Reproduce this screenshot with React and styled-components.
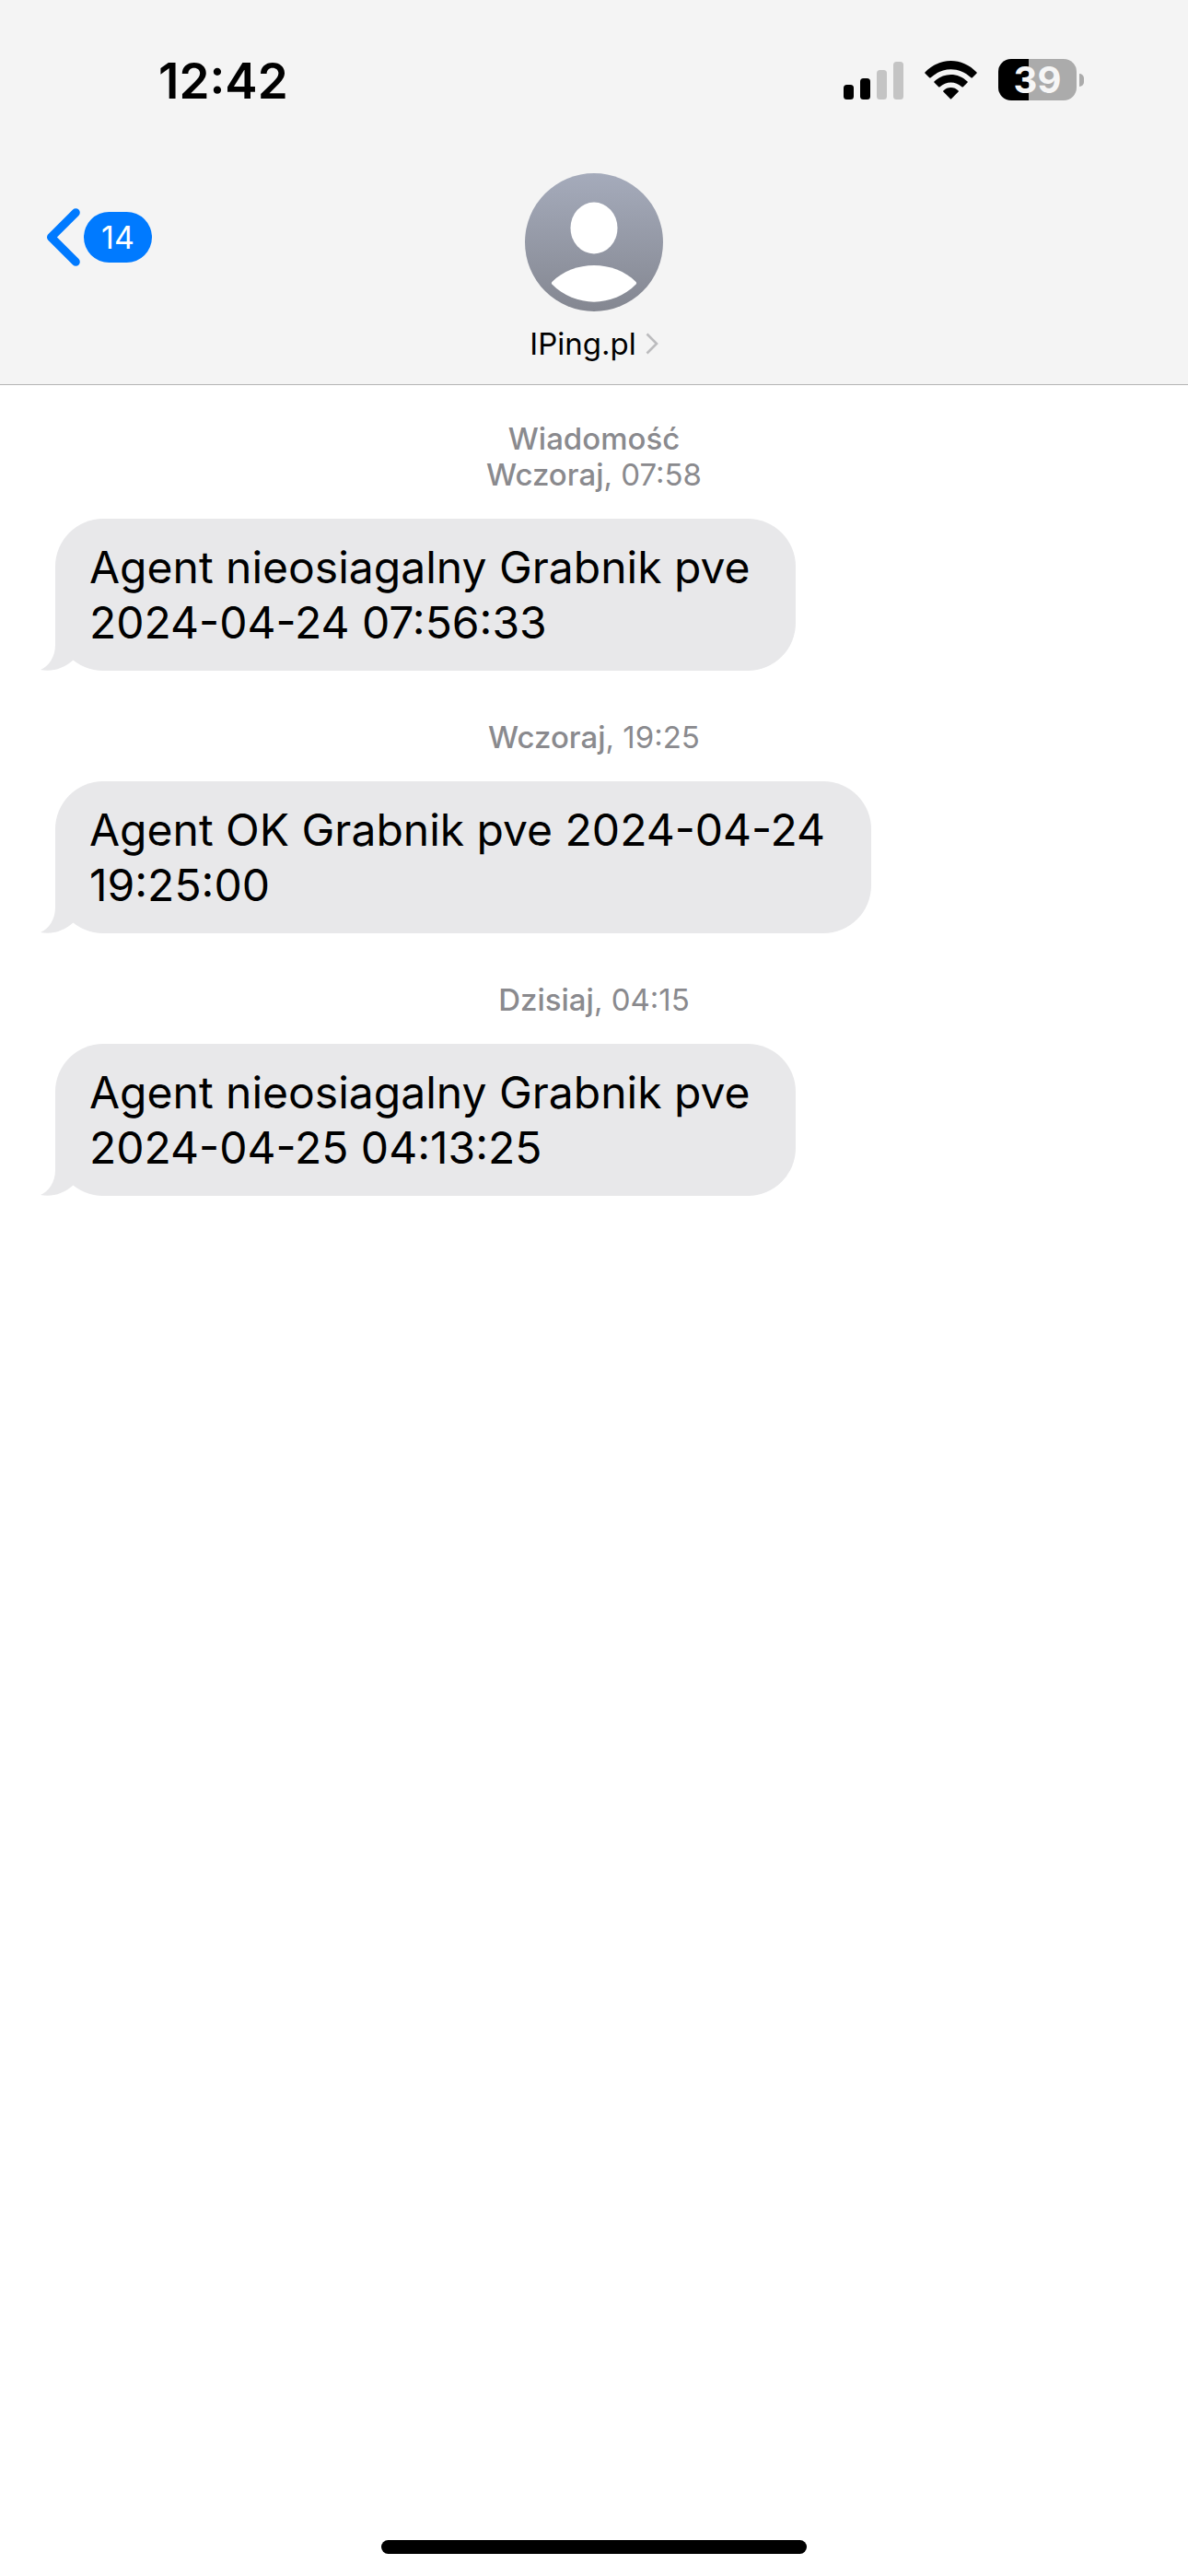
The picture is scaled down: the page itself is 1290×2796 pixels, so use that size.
import React from "react";
import styled, { createGlobalStyle } from "styled-components";

const GlobalStyle = createGlobalStyle`
  *, *::before, *::after { box-sizing: border-box; }
  body {
    margin: 0;
    background: #ffffff;
    color: #000000;
    font-family: Inter, "Noto Sans", sans-serif;
  }
  button {
    margin: 0;
    padding: 0;
    border: 0;
    background: none;
    color: inherit;
    font: inherit;
  }
`;

const Screen = styled.div`
  display: flex;
  flex-direction: column;
  min-height: 100vh;
`;

const Header = styled.header`
  background: #f4f4f4;
  border-bottom: 1px solid #b3b3b3;
`;

const StatusBar = styled.div`
  display: flex;
  align-items: flex-end;
  justify-content: space-between;
  height: 118px;
  padding: 0 113px 0 172px;
`;

const Clock = styled.time`
  font-size: 53px;
  font-weight: 600;
  line-height: 60px;
`;

const StatusIcons = styled.div`
  display: flex;
  align-items: center;
  gap: 23px;
  padding-bottom: 9px;
`;

const Battery = styled.div`
  display: flex;
  align-items: center;
  gap: 3px;
`;

const BatteryLevel = styled.div`
  width: 85px;
  height: 45px;
  border-radius: 14px;
  background: linear-gradient(
    to right,
    #000000 ${(p) => p.$level}%,
    #ababab ${(p) => p.$level}%
  );
  color: #f6f6f6;
  font-size: 40px;
  font-weight: 700;
  line-height: 45px;
  text-align: center;
`;

const BatteryTip = styled.div`
  width: 5px;
  height: 14px;
  border-radius: 0 5px 5px 0;
  background: #ababab;
`;

const NavBar = styled.nav`
  display: grid;
  grid-template-columns: 1fr auto 1fr;
  align-items: start;
  height: 299px;
  padding: 70px 50px 0;
`;

const BackButton = styled.button`
  display: flex;
  align-items: center;
  justify-self: start;
  gap: 4px;
  margin-top: 38px;
`;

const UnreadBadge = styled.span`
  min-width: 74px;
  height: 55px;
  border-radius: 28px;
  background: #007aff;
  color: #ffffff;
  font-size: 34px;
  line-height: 55px;
  text-align: center;
`;

const ContactButton = styled.button`
  display: flex;
  flex-direction: column;
  align-items: center;
  gap: 16px;
`;

const ContactName = styled.span`
  display: flex;
  align-items: center;
  gap: 10px;
  font-size: 33px;
  line-height: 38px;
`;

const Conversation = styled.main`
  display: flex;
  flex: 1;
  flex-direction: column;
  gap: 53px;
  padding: 39px 60px;
`;

const Entry = styled.section`
  display: flex;
  flex-direction: column;
  align-items: flex-start;
  gap: 28px;
`;

const Stamp = styled.div`
  align-self: stretch;
  color: #8a8a8e;
  font-size: 33px;
  line-height: 39px;
  text-align: center;
`;

const StampDay = styled.span`
  font-weight: 500;
`;

const Bubble = styled.div`
  position: relative;
  max-width: 80%;
  padding: 23px 50px 22px 37px;
  border-radius: 52px;
  background: #e8e8ea;
`;

const BubbleText = styled.p`
  margin: 0;
  font-size: 48px;
  line-height: 60px;
  white-space: pre-line;
`;

const Tail = styled.svg`
  position: absolute;
  bottom: 0;
  left: -16px;
`;

const HomeArea = styled.footer`
  display: flex;
  justify-content: center;
  padding: 24px 0;
`;

const HomeIndicator = styled.div`
  width: 462px;
  height: 15px;
  border-radius: 8px;
  background: #000000;
`;

const entries = [
  {
    title: "Wiadomość",
    day: "Wczoraj",
    time: "07:58",
    text: "Agent nieosiagalny Grabnik pve\n2024-04-24 07:56:33",
  },
  {
    day: "Wczoraj",
    time: "19:25",
    text: "Agent OK Grabnik pve 2024-04-24\n19:25:00",
  },
  {
    day: "Dzisiaj",
    time: "04:15",
    text: "Agent nieosiagalny Grabnik pve\n2024-04-25 04:13:25",
  },
];

function SignalIcon() {
  return (
    <svg width="65" height="42" viewBox="0 0 65 42" aria-hidden="true">
      <rect x="0" y="26" width="11" height="16" rx="3.5" fill="#000" />
      <rect x="18" y="19" width="11" height="23" rx="3.5" fill="#000" />
      <rect x="36" y="10" width="11" height="32" rx="3.5" fill="#c4c4c4" />
      <rect x="54" y="1" width="11" height="41" rx="3.5" fill="#c4c4c4" />
    </svg>
  );
}

function WifiIcon() {
  return (
    <svg width="57" height="42" viewBox="0 0 57 42" aria-hidden="true">
      <path d="M0.4 12.6C16 -4.2 41 -4.2 56.6 12.6Q57 13 56.6 13.5L51.6 18.4Q51 18.8 50.4 18.3C37.6 6.2 19.4 6.2 6.6 18.3Q6 18.8 5.4 18.4L0.4 13.5Q0 13 0.4 12.6Z" />
      <path d="M10.4 22.6C20.5 12.3 36.5 12.3 46.6 22.6Q47 23 46.6 23.5L41.6 28.4Q41 28.8 40.4 28.3C33.5 22 23.5 22 16.6 28.3Q16 28.8 15.4 28.4L10.4 23.5Q10 23 10.4 22.6Z" />
      <path d="M20.3 32.5C25 27.9 32 27.9 36.7 32.5Q37.1 33 36.7 33.5L29.1 41.3Q28.5 41.8 27.9 41.3L20.3 33.5Q19.9 33 20.3 32.5Z" />
    </svg>
  );
}

function BackIcon() {
  return (
    <svg width="37" height="63" viewBox="0 0 37 63" fill="none" aria-hidden="true">
      <path
        d="M32.3 4.7L5.5 31.5L32.3 58.3"
        stroke="#007aff"
        strokeWidth="9"
        strokeLinecap="round"
        strokeLinejoin="round"
      />
    </svg>
  );
}

function AvatarIcon() {
  return (
    <svg width="150" height="150" viewBox="0 0 150 150" aria-hidden="true">
      <defs>
        <linearGradient id="avatarFill" x1="0" y1="0" x2="0" y2="1">
          <stop offset="0" stopColor="#a5abbb" />
          <stop offset="1" stopColor="#848791" />
        </linearGradient>
      </defs>
      <circle cx="75" cy="75" r="75" fill="url(#avatarFill)" />
      <ellipse cx="75" cy="59.5" rx="25.5" ry="28" fill="#fff" />
      <path
        d="M29.4 118C53 94 97 94 120.6 118Q121.8 119.3 120.6 120.6C96 146 54 146 29.4 120.6Q28.2 119.3 29.4 118Z"
        fill="#fff"
      />
    </svg>
  );
}

function DisclosureIcon() {
  return (
    <svg width="14" height="24" viewBox="0 0 14 24" fill="none" aria-hidden="true">
      <path d="M1.5 1.5L12 12L1.5 22.5" stroke="#bcbcbe" strokeWidth="2.6" />
    </svg>
  );
}

function BubbleTail() {
  return (
    <Tail width="60" height="58" viewBox="0 0 60 58" aria-hidden="true">
      <path
        d="M16 0V30C16 43 9 53 0 57C12 59.5 25 56 36 46L58 6V0Z"
        fill="#e8e8ea"
      />
    </Tail>
  );
}

export default function App() {
  return (
    <>
      <GlobalStyle />
      <Screen>
        <Header>
          <StatusBar>
            <Clock>12:42</Clock>
            <StatusIcons>
              <SignalIcon />
              <WifiIcon />
              <Battery>
                <BatteryLevel $level={39}>39</BatteryLevel>
                <BatteryTip />
              </Battery>
            </StatusIcons>
          </StatusBar>
          <NavBar>
            <BackButton type="button">
              <BackIcon />
              <UnreadBadge>14</UnreadBadge>
            </BackButton>
            <ContactButton type="button">
              <AvatarIcon />
              <ContactName>
                IPing.pl
                <DisclosureIcon />
              </ContactName>
            </ContactButton>
          </NavBar>
        </Header>
        <Conversation>
          {entries.map((entry) => (
            <Entry key={entry.day + entry.time}>
              <Stamp>
                {entry.title && <div><StampDay>{entry.title}</StampDay></div>}
                <StampDay>{entry.day}</StampDay>, {entry.time}
              </Stamp>
              <Bubble>
                <BubbleTail />
                <BubbleText>{entry.text}</BubbleText>
              </Bubble>
            </Entry>
          ))}
        </Conversation>
        <HomeArea>
          <HomeIndicator />
        </HomeArea>
      </Screen>
    </>
  );
}
